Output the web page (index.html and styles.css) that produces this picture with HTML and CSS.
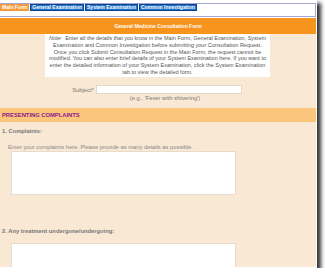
FILE: index.html
```html
<!DOCTYPE html>
<html lang="en">
    <head>
        <meta charset="UTF-8">
        <title>General Medicine Consultation Form</title>
        <link rel="stylesheet" href="styles.css">
    </head>
    <body>
        <div class="frame">
            <div class="tabs">
                <span class="tab active">Main Form</span>
                <span class="tab">General Examination</span>
                <span class="tab">System Examination</span>
                <span class="tab">Common Investigation</span>
            </div>
            <div class="title">General Medicine Consultation Form</div>
            <div class="form">
                <div class="note">
                    <em>Note:</em>&nbsp; Enter all the details that you know in the Main Form, General Examination, System<br>
                    Examination and Common Investigation before submitting your Consultation Request.<br>
                    Once you click Submit Consultation Request in the Main Form, the request cannot be<br>
                    modified. You can also enter brief details of your System Examination here. If you want to<br>
                    enter the detailed information of your System Examination, click the System Examination<br>
                    tab to view the detailed form.
                </div>
                <div class="subject-row">
                    <label for="subject">Subject*</label>
                    <input type="text" id="subject">
                </div>
                <div class="hint">(e.g., 'Fever with shivering')</div>

                <div class="section">PRESENTING COMPLAINTS</div>
                <div class="question">1. Complaints:</div>
                <div class="help">Enter your complaints here. Please provide as many details as possible.</div>
                <div class="textbox"></div>

                <div class="question second">2. Any treatment undergone/undergoing:</div>
                <div class="textbox"></div>
            </div>
        </div>
    </body>
</html>
```

FILE: styles.css
```css
body {
    margin: 0;
    background-color: #ffffff;
    font-family: "Liberation Sans", Arial, sans-serif;
}

.frame {
    width: 316px;
    height: 267px;
    overflow: hidden;
    background-color: #ffffff;
    border-right: 1px solid #ffffff;
    border-bottom: 1px solid #ffffff;
    box-shadow: 4px 3px 4px rgba(0, 0, 0, 0.8);
}

.tabs {
    display: flex;
    align-items: flex-start;
    gap: 1px;
    height: 12px;
    margin: 3px 0 0 -1px;
    border: 1px solid #a6a6d2;
}

.tab {
    height: 7px;
    line-height: 5px;
    padding: 0 1px;
    font-size: 5px;
    font-weight: bold;
    color: #ffffff;
    background-color: #1f74c9;
    border: 1px solid #0b3f8f;
    box-sizing: border-box;
    white-space: nowrap;
}

.tab.active {
    background-color: #f49a3e;
    border-color: #f49a3e;
}

.title {
    height: 16px;
    line-height: 16px;
    margin-top: 1px;
    text-align: center;
    font-size: 5px;
    font-weight: bold;
    color: #ffffff;
    background-color: #f7941d;
}

.form {
    height: 300px;
    background-color: #f9e8d4;
}

.note {
    width: 225px;
    height: 43px;
    margin-left: 45px;
    padding-top: 1px;
    box-sizing: border-box;
    background-color: #ffffff;
    text-align: center;
    font-size: 5.5px;
    line-height: 6.8px;
    color: #555555;
    white-space: nowrap;
}

.subject-row {
    display: flex;
    justify-content: center;
    align-items: center;
    gap: 2px;
    margin-top: 8px;
    padding-right: 2px;
}

.subject-row label {
    font-size: 5.8px;
    color: #777777;
}

.subject-row input {
    width: 146px;
    height: 9px;
    padding: 0;
    margin: 0;
    box-sizing: border-box;
    border: 1px solid #e2d9c9;
    background-color: #ffffff;
}

.hint {
    height: 7px;
    line-height: 7px;
    margin-top: 1px;
    padding-left: 14px;
    text-align: center;
    font-size: 5.8px;
    color: #777777;
}

.section {
    height: 14px;
    line-height: 14px;
    margin-top: 6px;
    padding-left: 2px;
    font-size: 5.8px;
    font-weight: bold;
    color: #8a1a8c;
    background-color: #fcc57c;
}

.question {
    height: 6px;
    line-height: 6px;
    margin-top: 6px;
    padding-left: 2px;
    font-size: 5.8px;
    font-weight: bold;
    color: #777777;
}

.question.second {
    margin-top: 33px;
}

.help {
    height: 6px;
    line-height: 6px;
    margin-top: 10px;
    padding-left: 8px;
    font-size: 5.8px;
    color: #888888;
}

.textbox {
    width: 225px;
    height: 44px;
    margin: 1px 0 0 11px;
    box-sizing: border-box;
    border: 1px solid #e6dccb;
    background-color: #ffffff;
}

.question.second + .textbox {
    margin-top: 9px;
}
```
